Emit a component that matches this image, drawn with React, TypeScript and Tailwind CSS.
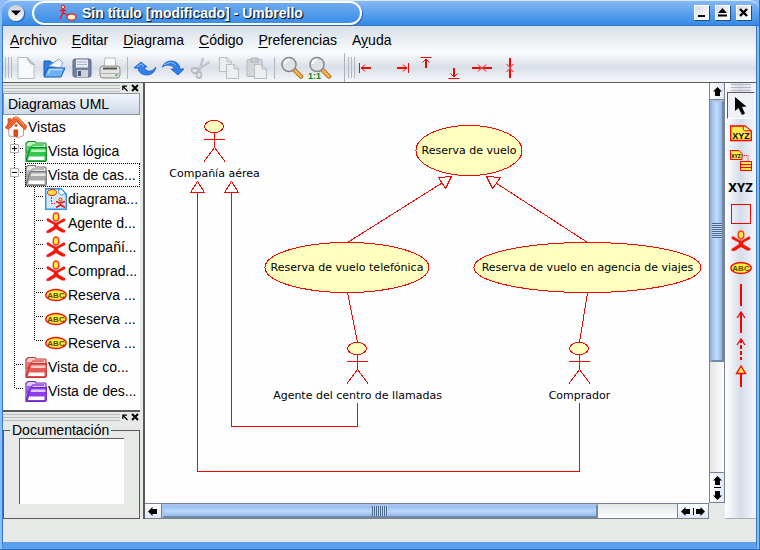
import React from "react";

type Kids = { children?: React.ReactNode };

const Icon = ({ children, size = 22 }: Kids & { size?: number }) => (
  <svg width={size} height={size} viewBox={`0 0 ${size} ${size}`} aria-hidden="true" className="block shrink-0">
    {children}
  </svg>
);

/* ---------- shared pictograms ---------- */

const ActorIcon = () => (
  <Icon>
    <path d="M1.500 7L3 6.300L10 10.500H12L19 6.300L20.500 7.500L20 9L13.200 12.500V14.200L20.500 18.500L20 20.500L17 20.500L11 17L5 20.800L1.500 21L1.500 19L8.800 14.200V12.500L2 9Z" fill="#fb1208" />
    <ellipse cx="11" cy="5" rx="2.800" ry="4" fill="#ffe94d" stroke="#fb3a08" strokeWidth="1.400" />
  </Icon>
);

const UseCaseIcon = () => (
  <Icon>
    <ellipse cx="11" cy="11" rx="10.200" ry="5.500" fill="#ffee3c" stroke="#ef1414" strokeWidth="1.400" />
    <text x="11" y="14" textAnchor="middle" className="font-['Liberation_Sans'] text-[8px] font-bold" fill="#5a4a00">ABC</text>
  </Icon>
);

const FolderIcon = ({ dark, mid, light }: { dark: string; mid: string; light: string }) => (
  <Icon>
    <path d="M1 20V3.500L3 1.500H10L11 3H20Q21 3 21 4V12H1Z" fill={light} stroke={dark} strokeWidth="1.200" />
    <path d="M3 18V7H6L8 5H19" fill="none" stroke={mid} strokeWidth="1.500" />
    <path d="M1 21L4.500 9.500Q5 7.500 7 7.500H21.300V20Q21.300 21.300 20 21.300H1Z" fill={mid} stroke={dark} strokeWidth="1.200" />
    <path d="M6.500 9.500H20.500V12H5.500Z" fill={light} />
    <path d="M4 16.500H19.500V20H3Z" fill="#fff" />
  </Icon>
);

const HomeIcon = () => (
  <Icon>
    <path d="M3.500 11L11 4L18.500 11V19.500L14 21.500L4 20Z" fill="#fbf7f5" stroke="#a89c98" strokeWidth=".9" />
    <path d="M3 2.500H6V7L3 9Z" fill="#e8683a" stroke="#b0522c" strokeWidth=".6" />
    <path d="M0 11.500L8.500 1.500Q11 0 13 1.200L22 10.500L20 14L11.500 5.500L3.500 13.500Z" fill="#f4602c" stroke="#c8481c" strokeWidth=".7" />
    <path d="M9 1.800L12 1.500L19 9" fill="none" stroke="#ffb48c" />
    <path d="M8.500 13.500H13V21L8.500 20.500Z" fill="#dc4a1c" />
    <circle cx="11" cy="9.500" r="1.400" fill="#dc4a1c" />
  </Icon>
);

const DiagramIcon = () => (
  <Icon>
    <path d="M.700 .700H16L21.300 6V21.300H.7Z" fill="#cfe8fc" stroke="#2f92e4" strokeWidth="1.400" />
    <path d="M14 1Q13 7 17 7Q19 5 21 6L16 1Z" fill="#fff" stroke="#2f92e4" />
    <ellipse cx="7" cy="4.500" rx="4.500" ry="3" fill="#ffdf3c" stroke="#ef2010" />
    <path d="M6.500 9V15.500H10" fill="none" stroke="#e22" strokeDasharray="2 1" />
    <circle cx="15.500" cy="11.500" r="1.500" fill="#ffdf3c" stroke="#ef2010" />
    <path d="M11 13.500L15 15L20 13.500M15.500 15V17M11 19.500L15.500 17L20 19.500" fill="none" stroke="#ef1810" strokeWidth="1.700" />
  </Icon>
);

/* ---------- title bar ---------- */

const WindowButton = ({ label, children }: Kids & { label: string }) => (
  <button aria-label={label} className="flex size-[15px] items-center justify-center border border-white bg-linear-to-br from-[#d6dce6] to-white shadow-[1px_1px_0_#1c4c8c]">
    <svg width="11" height="11" viewBox="0 0 11 11" aria-hidden="true">{children}</svg>
  </button>
);

const TitleBar = () => (
  <header className="flex h-[26px] items-start justify-between rounded-t-[10px] border-t border-[#d6e8fc] border-b border-b-[#2e74cc] bg-linear-to-b from-[#85b8f3] via-[#5ba1ee] to-[#338ae6] pr-[8px] pl-[6px]">
    <div className="flex items-center">
      <button aria-label="Menú de la ventana" className="mr-[8px] flex size-[16px] items-center justify-center rounded-full bg-linear-to-b from-[#c9ced6] to-white shadow-[1px_1px_1px_#1c5cac]">
        <svg width="10" height="6" viewBox="0 0 10 6" aria-hidden="true"><path d="M0 .5H10L5 5.500Z" fill="#000" /></svg>
      </button>
      <div className="flex h-[24px] w-[330px] items-center rounded-full border-2 border-white bg-linear-to-b from-[#6eaaf0] to-[#3a8ee8] pl-[25px] shadow-[1px_1px_0_#2a68b8]">
        <svg width="18" height="18" viewBox="0 0 18 18" aria-hidden="true" className="mr-[5px] block">
          <circle cx="4" cy="3" r="1.800" fill="#ffd9a0" stroke="#f31010" />
          <path d="M4 5V10M1 6.500H7M4 9L1 15M4 9L9 11" fill="none" stroke="#f31010" strokeWidth="1.300" />
          <ellipse cx="12.500" cy="13" rx="4.500" ry="3.200" fill="#fff6c8" stroke="#f31010" strokeWidth="1.200" />
        </svg>
        <h1 className="text-[14px] leading-[18px] font-bold whitespace-nowrap text-white [text-shadow:1px_1px_1px_#123,1px_1px_0_#124]">Sin título [modificado] - Umbrello</h1>
      </div>
    </div>
    <div className="flex gap-[6px] pt-[4px]">
      <WindowButton label="Minimizar"><path d="M2 8H9V10H2Z" /></WindowButton>
      <WindowButton label="Maximizar"><path d="M5.500 1L10 6H1ZM1 7.500H10V9.500H1Z" /></WindowButton>
      <WindowButton label="Cerrar"><path d="M2 2L9 9M9 2L2 9" stroke="#000" strokeWidth="2.400" /></WindowButton>
    </div>
  </header>
);

/* ---------- menu and tool bars ---------- */

const menus: [string, string, string][] = [
  ["", "A", "rchivo"],
  ["", "E", "ditar"],
  ["", "D", "iagrama"],
  ["", "C", "ódigo"],
  ["", "P", "referencias"],
  ["A", "y", "uda"],
];

const MenuBar = () => (
  <nav className="flex h-[27px] items-center gap-[15px] bg-linear-to-b from-[#d8dfe8] to-[#fafcfd] px-[7px] text-[14px] leading-[18px]">
    {menus.map(([a, key, b]) => (
      <button key={a + key} className="whitespace-nowrap">
        {a}<span className="underline underline-offset-2">{key}</span>{b}
      </button>
    ))}
  </nav>
);

const ToolButton = ({ label, children }: Kids & { label: string }) => (
  <button aria-label={label} className="flex h-[28px] w-[28px] shrink-0 items-center justify-center">{children}</button>
);

const Grip = () => <div className="h-[21px] w-[7px] shrink-0 border-x border-[#b4b8be] px-[2px]"><div className="h-full w-px bg-[#b4b8be]" /></div>;
const Divider = () => <div className="mx-[3px] h-[22px] w-px shrink-0 bg-[#b0b6c0]" />;

const Lens = ({ children }: Kids) => (
  <Icon size={24}>
    <path d="M14.500 14L21 20.500" stroke="#a86a10" strokeWidth="4.500" strokeLinecap="round" />
    <path d="M14.500 14L21 20.500" stroke="#f3b54a" strokeWidth="2.500" strokeLinecap="round" />
    <circle cx="9" cy="8.500" r="7" fill="#dfe2e4" stroke="#85898c" strokeWidth="1.500" />
    <path d="M4.500 8Q5 4 9 3.500" fill="none" stroke="#fff" strokeWidth="2" />
    {children}
  </Icon>
);

const Page = ({ x, y }: { x: number; y: number }) => (
  <path transform={`translate(${x} ${y})`} d="M.5 .5H8L12.500 5V14.500H.5ZM8 .5V5H12.500" fill="#eceeef" stroke="#b9bdc0" />
);

const ToolBar = () => (
  <div className="flex h-[29px] items-center overflow-hidden bg-linear-to-b from-[#fafcfd] via-[#d9dfe8] to-[#f6f9fb] pl-[2px]">
    <Grip />
    <ToolButton label="Nuevo">
      <Icon>
        <path d="M3 .5H12L19 7.500V21.500H3Z" fill="#f8f9fa" stroke="#b6bcc4" />
        <path d="M12 .5Q14 7.500 19 7.500Z" fill="#d9dde2" stroke="#a4aab2" />
      </Icon>
    </ToolButton>
    <ToolButton label="Abrir">
      <Icon>
        <path d="M1 19V4H7L9 6H17V10" fill="#2d7fe0" stroke="#1257b4" />
        <path d="M6 9L16 2L20 6L17 11Z" fill="#f4f8fc" stroke="#7da4d0" />
        <path d="M1 20L5 11H22L18 20Z" fill="#6db2f8" stroke="#1257b4" />
        <path d="M5 17L7 12.500H19" fill="none" stroke="#b9dcff" strokeWidth="1.500" />
      </Icon>
    </ToolButton>
    <ToolButton label="Guardar">
      <Icon>
        <rect x="2" y="2" width="18" height="18" rx="2" fill="#7482a0" stroke="#5a6480" />
        <rect x="5" y="2.500" width="12" height="8" fill="#e9edf3" />
        <path d="M6 5H16M6 7.500H16" stroke="#aab4c4" />
        <rect x="6" y="13" width="11" height="7" fill="#cdd3dc" />
        <rect x="7" y="14" width="3" height="5" fill="#4a5670" />
      </Icon>
    </ToolButton>
    <ToolButton label="Imprimir">
      <Icon>
        <path d="M5 10L6 1H16L17 10Z" fill="#fff" stroke="#b5b5b5" />
        <path d="M1 12Q1 9 4 9H18Q21 9 21 12V18Q21 21 18 21H4Q1 21 1 18Z" fill="#e2e2e0" stroke="#8a8a8a" />
        <path d="M4 11.500H18" stroke="#555" strokeWidth="2" />
        <path d="M2 16.500H20" stroke="#b4b4b2" />
        <rect x="16" y="17.500" width="3" height="1.500" fill="#3c3" />
      </Icon>
    </ToolButton>
    <Divider />
    <ToolButton label="Deshacer">
      <Icon>
        <path d="M0 11L7 5L13 10H10Q12 15 17 14Q20 13 22 10Q20 18 13 18Q5 18 4 11Z" fill="#2f80ee" stroke="#1658b8" strokeWidth=".8" />
        <path d="M3 10L7 7L10 9.500" fill="none" stroke="#8fc4ff" />
      </Icon>
    </ToolButton>
    <ToolButton label="Rehacer">
      <Icon>
        <path d="M22 12L16 18L9 12H13Q11 8 6 8Q3 8 0 10Q3 4 9 4Q17 4 18 12Z" fill="#2f80ee" stroke="#1658b8" strokeWidth=".8" />
        <path d="M2 8Q9 3 14 8" fill="none" stroke="#8fc4ff" />
      </Icon>
    </ToolButton>
    <ToolButton label="Cortar">
      <Icon>
        <path d="M13 1L9 15M19.500 5L7 13" stroke="#c3c6c9" strokeWidth="2.500" />
        <ellipse cx="5" cy="13.500" rx="3.500" ry="2.500" fill="none" stroke="#b9bcbf" strokeWidth="1.800" />
        <ellipse cx="9" cy="18" rx="2.500" ry="3" fill="none" stroke="#b9bcbf" strokeWidth="1.800" />
      </Icon>
    </ToolButton>
    <ToolButton label="Copiar"><Icon><Page x={1} y={0} /><Page x={8} y={7} /></Icon></ToolButton>
    <ToolButton label="Pegar">
      <Icon>
        <rect x="1" y="2.500" width="15" height="17" rx="1" fill="#d3d6d8" stroke="#b6babd" />
        <path d="M5 1H12V5H5Z" fill="#cbced0" stroke="#acb0b3" />
        <Page x={8} y={7} />
      </Icon>
    </ToolButton>
    <Divider />
    <ToolButton label="Ampliar"><Lens /></ToolButton>
    <ToolButton label="Tamaño real">
      <Lens>
        <text x="0" y="23" className="font-['Liberation_Sans'] text-[9px] font-bold" fill="#0a8a10">1:1</text>
      </Lens>
    </ToolButton>
    <div className="mr-[3px] ml-[10px] h-[29px] w-px shrink-0 bg-[#aab0b8]" />
    <Grip />
    <div className="ml-px flex text-[#f00]">
      {alignTools.map(([label, d, thin]) => (
        <ToolButton key={label} label={label}>
          <Icon>
            <path d={d} fill="none" stroke="currentColor" strokeWidth="2" />
            <path d={thin} fill="none" stroke="currentColor" />
          </Icon>
        </ToolButton>
      ))}
    </div>
  </div>
);

const alignTools: [string, string, string][] = [
  ["Alinear a la izquierda", "M2 11H12", "M.5 6V16M6 7.500L2.500 11L6 14.500"],
  ["Alinear a la derecha", "M10 11H20", "M21.500 6V16M16 7.500L19.500 11L16 14.500"],
  ["Alinear arriba", "M11 2V11", "M5.500 .5H16.500M7.500 5.500L11 2L14.500 5.500"],
  ["Alinear abajo", "M11 11V20", "M5.500 21.500H16.500M7.500 16.500L11 20L14.500 16.500"],
  ["Centrar verticalmente", "M1 11H9M13 11H21", "M7 7.500L10.500 11L7 14.500M15 7.500L11.500 11L15 14.500M9 11H13"],
  ["Centrar horizontalmente", "M11 1V9M11 13V21", "M7.500 7L11 10.500L14.500 7M7.500 15L11 11.500L14.500 15M11 9V13"],
];

/* ---------- left docks ---------- */

const DockHandle = () => (
  <div className="flex h-[10px] shrink-0 items-center">
    <div className="h-[7px] flex-1 border-y border-[#b9bcbe] py-[2px]"><div className="h-px bg-[#b9bcbe]" /></div>
    <button aria-label="Desacoplar" className="ml-[2px]">
      <svg width="6" height="7" viewBox="0 0 6 7" aria-hidden="true" className="block"><path d="M.8 5V1.200H5M1 1.500L5.500 6" fill="none" stroke="#000" strokeWidth="1.200" /></svg>
    </button>
    <button aria-label="Cerrar panel" className="mr-px ml-[3px]">
      <svg width="8" height="8" viewBox="0 0 8 8" aria-hidden="true" className="block"><path d="M1 1L7 7M7 1L1 7" stroke="#000" strokeWidth="2" /></svg>
    </button>
  </div>
);

type Guide = "tee" | "end" | "pass" | "plus" | "minus";

const GuideCell = ({ kind }: { kind: Guide }) => {
  const boxed = kind === "plus" || kind === "minus";
  return (
    <svg width="20" height="24" viewBox="0 0 20 24" aria-hidden="true" className="block shrink-0" shapeRendering="crispEdges">
      <path d={kind === "end" ? "M9.500 0V10" : "M9.500 0V24"} stroke="#000" strokeDasharray="1 1" />
      {kind !== "pass" && <path d="M11 9.500H18" stroke="#000" strokeDasharray="1 1" />}
      {boxed && <rect x="5.500" y="5.500" width="8" height="8" fill="#fff" stroke="#b0b0b0" />}
      {boxed && <path d={kind === "plus" ? "M7 9.500H12M9.500 7V12" : "M7 9.500H12"} stroke="#000" />}
    </svg>
  );
};

const tree: { guides: Guide[]; icon: React.ReactNode; text: string; current?: boolean }[] = [
  { guides: [], icon: <HomeIcon />, text: "Vistas" },
  { guides: ["plus"], icon: <FolderIcon dark="#0c8a28" mid="#30c848" light="#c0f8c4" />, text: "Vista lógica" },
  { guides: ["minus"], icon: <FolderIcon dark="#767676" mid="#a9a9a9" light="#e8e8e8" />, text: "Vista de cas...", current: true },
  { guides: ["pass", "tee"], icon: <DiagramIcon />, text: "diagrama..." },
  { guides: ["pass", "tee"], icon: <ActorIcon />, text: "Agente d..." },
  { guides: ["pass", "tee"], icon: <ActorIcon />, text: "Compañí..." },
  { guides: ["pass", "tee"], icon: <ActorIcon />, text: "Comprad..." },
  { guides: ["pass", "tee"], icon: <UseCaseIcon />, text: "Reserva ..." },
  { guides: ["pass", "tee"], icon: <UseCaseIcon />, text: "Reserva ..." },
  { guides: ["pass", "end"], icon: <UseCaseIcon />, text: "Reserva ..." },
  { guides: ["tee"], icon: <FolderIcon dark="#c43434" mid="#e85a54" light="#ffccc6" />, text: "Vista de co..." },
  { guides: ["end"], icon: <FolderIcon dark="#6a28be" mid="#8e3cf0" light="#e0ccfb" />, text: "Vista de des..." },
];

const TreeDock = () => (
  <section className="flex flex-1 flex-col">
    <DockHandle />
    <h2 className="flex h-[22px] items-center border border-[#8e97a4] bg-linear-to-b from-[#f2f6fb] to-[#ced9e8] pl-[4px] text-[14px] leading-[18px]">Diagramas UML</h2>
    <ul role="tree" aria-label="Diagramas UML" className="flex-1 bg-[#fefefe] text-[14px] leading-[18px]">
      {tree.map((row, i) => (
        <li key={i} role="treeitem" aria-level={row.guides.length + 1} className="flex h-[24px] items-center pl-[2px]">
          {row.guides.map((g, j) => <GuideCell key={j} kind={g} />)}
          <span className={row.current ? "flex h-full flex-1 items-center gap-px outline-1 -outline-offset-1 outline-dotted outline-black" : "flex flex-1 items-center gap-px"}>
            {row.icon}
            <span className="whitespace-nowrap">{row.text}</span>
          </span>
        </li>
      ))}
    </ul>
  </section>
);

const DocDock = () => (
  <section className="shrink-0 border-t-2 border-[#5a5a5a]">
    <DockHandle />
    <fieldset className="border border-[#5a5a5a] px-[15px] pb-[14px]">
      <legend id="doc-label" className="-ml-[9px] px-[2px] text-[14px] leading-[16px]">Documentación</legend>
      <textarea aria-labelledby="doc-label" className="block h-[66px] w-full resize-none border-t border-l border-[#5a5a5a] bg-[#fefefe]" />
    </fieldset>
  </section>
);

/* ---------- diagram ---------- */

const Actor = ({ x, y, name }: { x: number; y: number; name: string }) => (
  <g>
    <ellipse cx={x - 0.5} cy={y} rx="9.500" ry="6" fill="#ffffc0" />
    <path d={`M${x} ${y + 6}V${y + 21}M${x - 10.5} ${y + 13}H${x + 10.5}M${x - 10.5} ${y + 35}L${x} ${y + 21}L${x + 10.5} ${y + 35}`} fill="none" />
    <text x={x} y={y + 50} textAnchor="middle" stroke="none" fill="#000">{name}</text>
  </g>
);

const UseCase = ({ x, y, rx, name }: { x: number; y: number; rx: number; name: string }) => (
  <g>
    <ellipse cx={x} cy={y} rx={rx} ry="25" fill="#ffffc0" />
    <text x={x} y={y + 3} textAnchor="middle" stroke="none" fill="#000">{name}</text>
  </g>
);

const Diagram = () => (
  <svg width="563" height="420" viewBox="0 0 563 420" role="img" aria-label="Diagrama de casos de uso" className="block font-['DejaVu_Sans',sans-serif] text-[11px]">
    <g stroke="#f00" fill="none" shapeRendering="crispEdges">
      <path d="M202.500 159.500L297 100M442.500 159.500L351 100M202.500 209.500L212.500 259.500M442.500 209.500L434.500 259.500" />
      <path d="M306.500 93.500L293.500 94.500L300.500 105.500ZM341.500 93.500L355.500 94.500L347.500 105.500Z" />
      <path d="M52.500 98.500L45.500 109.500H59.500ZM52.500 109.500V388.500H434.500V320M86.500 98.500L79.500 109.500H93.500ZM86.500 109.500V343.500H212.500V320" />
      <Actor x={69.5} y={43.5} name="Compañía aérea" />
      <Actor x={212.5} y={265.5} name="Agente del centro de llamadas" />
      <Actor x={434.5} y={265.5} name="Comprador" />
      <UseCase x={324} y={67.5} rx={53} name="Reserva de vuelo" />
      <UseCase x={202} y={184.5} rx={82} name="Reserva de vuelo telefónica" />
      <UseCase x={442.5} y={184.5} rx={113.5} name="Reserva de vuelo en agencia de viajes" />
    </g>
  </svg>
);

/* ---------- scroll bars ---------- */

const Up = "M5.500 0L11 5.500H8.500V11H2.500V5.500H0Z";
const Down = "M5.500 11L11 5.500H8.500V0H2.500V5.500H0Z";
const Left = "M0 5.500L5.500 0V2.500H11V8.500H5.500V11Z";
const Right = "M11 5.500L5.500 0V2.500H0V8.500H5.500V11Z";

const ScrollArrow = ({ d, label }: { d: string; label: string }) => (
  <button aria-label={label} className="flex size-[14px] shrink-0 items-center justify-center">
    <svg width="9" height="9" viewBox="0 0 11 11" aria-hidden="true"><path d={d} /></svg>
  </button>
);

const VScroll = () => (
  <div className="flex w-[16px] shrink-0 flex-col border-x border-[#78828e] bg-linear-to-r from-[#e2e4e6] to-white">
    <div className="flex h-[17px] items-center border-b border-[#78828e] bg-linear-to-r from-white to-[#dfe7f8]"><ScrollArrow d={Up} label="Subir" /></div>
    <div className="flex-1">
      <div className="flex h-[70.5%] items-center border-2 border-[#7288a4] border-t-[#a8c4ec] border-l-[#9ab4dc] bg-linear-to-r from-[#9cc2f4] via-[#c4dcfc] to-[#8eb4e8]">
        <div className="h-[16px] w-full bg-[repeating-linear-gradient(to_bottom,#4a6688_0_1px,#c2dafa_1px_2px)]" />
      </div>
    </div>
    <div className="flex h-[31px] flex-col items-center justify-center border-y border-[#78828e] bg-linear-to-r from-white to-[#dfe7f8]">
      <ScrollArrow d={Up} label="Subir" /><div className="h-px w-[7px] shrink-0 bg-black" /><ScrollArrow d={Down} label="Bajar" />
    </div>
  </div>
);

const HScroll = () => (
  <div className="flex h-[16px] shrink-0 border-y border-[#78828e] bg-linear-to-b from-[#e2e4e6] to-white">
    <div className="flex w-[17px] items-center border-r border-[#78828e] bg-linear-to-b from-white to-[#dfe7f8]"><ScrollArrow d={Left} label="Izquierda" /></div>
    <div className="flex-1">
      <div className="flex h-full w-[84.7%] justify-center border-2 border-[#7288a4] border-t-[#a8c4ec] border-l-[#a8c4ec] bg-linear-to-b from-[#94bcf4] via-[#bcd8fc] to-[#94bae8]">
        <div className="h-full w-[16px] bg-[repeating-linear-gradient(to_right,#4a6688_0_1px,#c2dafa_1px_2px)]" />
      </div>
    </div>
    <div className="flex w-[32px] items-center justify-center border-x border-[#78828e] bg-linear-to-b from-white to-[#dfe7f8]">
      <ScrollArrow d={Left} label="Izquierda" /><div className="h-[7px] w-px shrink-0 bg-black" /><ScrollArrow d={Right} label="Derecha" />
    </div>
  </div>
);

/* ---------- UML palette ---------- */

const XyzText = ({ y, x = 11, cls }: { y: number; x?: number; cls: string }) => (
  <text x={x} y={y} textAnchor="middle" fill="#000" className={cls}>XYZ</text>
);

const palette: [string, React.ReactNode][] = [
  ["Nota", (
    <Icon>
      <path d="M.7 4H15L21.300 9V18.500H.7Z" fill="#ffe94a" stroke="#f00" strokeWidth="1.300" />
      <path d="M14 4Q12 9 16 9Q18 8 21 9" fill="#fff7a0" stroke="#f00" />
      <XyzText y={17} cls="font-['Liberation_Sans'] text-[9px] font-bold" />
    </Icon>
  )],
  ["Ancla", (
    <Icon>
      <path d="M.5 1.500H9L12 4.500V10.500H.5Z" fill="#ffe94a" stroke="#f00" />
      <XyzText x={6} y={9} cls="font-['Liberation_Sans'] text-[5px] font-bold" />
      <path d="M12 6.500H18V12" fill="none" stroke="#f00" strokeDasharray="1 1" />
      <path d="M10.500 12.500H21.500V21.500H10.500ZM10.500 15.500H21.500M10.500 18.500H21.500" fill="#ffe94a" stroke="#f00" />
    </Icon>
  )],
  ["Texto", <span className="font-['Noto_Sans',sans-serif] text-[13px] leading-[18px] font-bold">XYZ</span>],
  ["Caja", <Icon><rect x="1.500" y="1.500" width="19" height="19" fill="none" stroke="#f00" /></Icon>],
  ["Actor", <ActorIcon />],
  ["Caso de uso", <UseCaseIcon />],
  ["Asociación", <Icon><path d="M11 0V22" stroke="#f00" strokeWidth="2" /></Icon>],
  ["Asociación unidireccional", <Icon><path d="M11 1V22" stroke="#f00" strokeWidth="2" /><path d="M7 7L11 1L15 7" fill="none" stroke="#f00" strokeWidth="1.300" /></Icon>],
  ["Dependencia", <Icon><path d="M11 1V22" stroke="#f00" strokeWidth="2" strokeDasharray="4 2" /><path d="M7 7L11 1L15 7" fill="none" stroke="#f00" strokeWidth="1.300" /></Icon>],
  ["Generalización", <Icon><path d="M11 8V22" stroke="#f00" strokeWidth="2" /><path d="M6.500 8.500L11 1L15.500 8.500Z" fill="#ffe94a" stroke="#f00" strokeWidth="1.300" /></Icon>],
];

const Palette = () => (
  <aside className="flex w-[31px] shrink-0 flex-col items-center border-b border-[#a9aeb4] bg-linear-to-r from-white via-[#d6dde8] to-[#f4f7fa]">
    <div className="my-px h-[7px] w-[20px] shrink-0 border-y border-[#b4b8be] py-[2px]"><div className="h-px bg-[#b4b8be]" /></div>
    <button aria-label="Seleccionar" aria-pressed="true" className="flex h-[27px] w-[28px] items-center justify-center border border-t-[#5a5a5a] border-r-white border-b-white border-l-[#5a5a5a] bg-[#eef1f6]">
      <Icon><path d="M5 2V16L8.500 13L12 20L15 18.500L12 12L16.500 11.500Z" fill="#000" /></Icon>
    </button>
    {palette.map(([label, icon]) => (
      <button key={label} aria-label={label} className="flex h-[27px] w-[28px] items-center justify-center">{icon}</button>
    ))}
  </aside>
);

export default function App() {
  return (
    <div className="flex min-h-screen flex-col border-r border-b border-[#2e6cb4] bg-[#8cbcf2] pl-[2px] font-['Liberation_Sans',Arial,sans-serif] text-black">
      <TitleBar />
      <div className="mr-[2px] flex flex-1 flex-col border-x border-b-[7px] border-x-[#2f76cc] border-b-[#5a9ff0] bg-[#e6e9e6]">
        <MenuBar />
        <ToolBar />
        <main className="flex flex-1 border-t border-[#5a5a5a]">
          <div className="flex w-[137px] shrink-0 flex-col">
            <TreeDock />
            <DocDock />
          </div>
          <div className="ml-[3px] flex min-w-0 flex-1 border-l-2 border-[#5a5a5a]">
            <div className="flex min-w-0 flex-1 flex-col">
              <div className="min-w-0 flex-1 overflow-hidden bg-[#fefefe]"><Diagram /></div>
              <HScroll />
            </div>
            <div className="flex flex-col pb-[16px]">
              <div className="flex flex-1"><VScroll /></div>
            </div>
          </div>
          <Palette />
        </main>
        <footer className="h-[23px] shrink-0" />
      </div>
    </div>
  );
}
